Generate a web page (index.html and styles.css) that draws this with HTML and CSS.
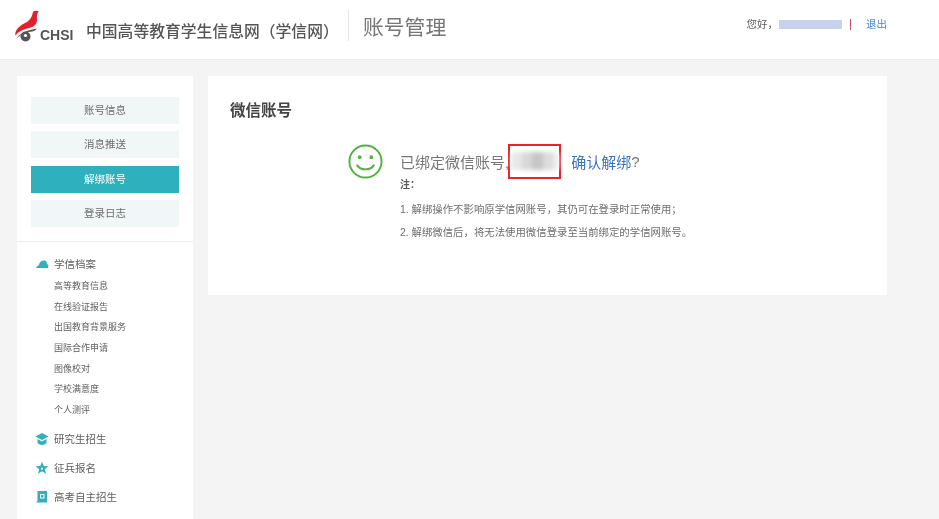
FILE: index.html
```html
<!DOCTYPE html>
<html lang="zh-CN">
<head>
<meta charset="utf-8">
<title>账号管理</title>
<link rel="stylesheet" href="styles.css">
</head>
<body>
<div class="page">
  <header class="topbar">
    <div class="brand">
      <svg class="logo" viewBox="0 0 26 34" aria-hidden="true">
        <path d="M19 2 C20 0.500 23 0.300 25 1.500 C22.500 3.500 23 7 23 10 C23 14 20 17 15 18 C10 19 5 21 1.500 25.500 C0 21 6 15 11 13 C15.500 11 18 7 19 2 Z" fill="#e3202b"/>
        <path d="M2 29 C5.500 23.500 13 20 23 18.500 C22 20 20 21 18.500 21.500 C12 22 6 25 2 29 Z" fill="#555"/>
        <circle cx="11.500" cy="26.500" r="5" fill="#555"/>
        <circle cx="11.500" cy="25.500" r="1.600" fill="#fff"/>
      </svg>
      <span class="logo-text">CHSI</span>
      <span class="site-name">中国高等教育学生信息网（学信网）</span>
      <span class="page-title">账号管理</span>
    </div>
    <div class="user">
      <span>您好，</span>
      <span class="user-mask"></span>
      <span class="user-sep"></span>
      <a class="user-exit">退出</a>
    </div>
  </header>

  <div class="content">
    <aside class="sidebar">
      <nav class="tabs">
        <a class="tab">账号信息</a>
        <a class="tab">消息推送</a>
        <a class="tab tab-active">解绑账号</a>
        <a class="tab">登录日志</a>
      </nav>
      <div class="menu">
        <div class="menu-row menu-row-first">
          <svg class="menu-icon" viewBox="0 0 14 14" aria-hidden="true"><path d="M1 11 C2 9 3 8.500 4 8 C4.500 4.500 7 3 9.500 3.500 C11.500 4 12 5.500 12 7 L13.500 8 L13 11 Z" fill="#30b0bd"/></svg>
          <span>学信档案</span>
        </div>
        <ul class="submenu">
          <li>高等教育信息</li>
          <li>在线验证报告</li>
          <li>出国教育背景服务</li>
          <li>国际合作申请</li>
          <li>图像校对</li>
          <li>学校满意度</li>
          <li>个人测评</li>
        </ul>
        <div class="menu-row menu-row-gap">
          <svg class="menu-icon" viewBox="0 0 14 14" aria-hidden="true"><path d="M7 1 L13.500 4.500 L7 8 L0.500 4.500 Z" fill="#30b0bd"/><path d="M2.500 7 L7 9.500 L11.500 7 L11.500 11 C9 13.500 5 13.500 2.500 11 Z" fill="#30b0bd"/></svg>
          <span>研究生招生</span>
        </div>
        <div class="menu-row">
          <svg class="menu-icon" viewBox="0 0 14 14" aria-hidden="true"><path fill-rule="evenodd" d="M7 .8 L8.800 5 L13.300 5.300 L9.800 8.200 L11 12.800 L7 10.300 L3 12.800 L4.200 8.200 L.7 5.300 L5.200 5 Z M6 6.800 H8 V8.600 H6 Z" fill="#30b0bd"/></svg>
          <span>征兵报名</span>
        </div>
        <div class="menu-row">
          <svg class="menu-icon" viewBox="0 0 14 14" aria-hidden="true"><path fill-rule="evenodd" d="M2.500 1 H12 V12.500 H1 L2.500 11 Z M5 4 H9.500 V8.500 H5 Z M6 5 V7.500 H8.500 V5 Z" fill="#30b0bd"/></svg>
          <span>高考自主招生</span>
        </div>
      </div>
    </aside>

    <main class="panel">
      <h1 class="panel-title">微信账号</h1>
      <div class="bind">
        <svg class="smile" viewBox="0 0 36 36" aria-hidden="true">
          <circle cx="18" cy="18" r="16.500" fill="none" stroke="#4fb33c" stroke-width="2"/>
          <circle cx="12" cy="13.500" r="1.900" fill="#4fb33c"/>
          <circle cx="24" cy="13.500" r="1.900" fill="#4fb33c"/>
          <path d="M9.500 22 C13 27.500 23 27.500 26.500 22" fill="none" stroke="#4fb33c" stroke-width="2" stroke-linecap="round"/>
        </svg>
        <div class="bind-body">
          <p class="bind-line">
            <span>已绑定微信账号,</span><span class="account-box"><span class="account-mask"></span></span><a class="confirm">确认解绑</a><span>?</span>
          </p>
          <p class="note-title">注：</p>
          <p class="note">1. 解绑操作不影响原学信网账号，其仍可在登录时正常使用；</p>
          <p class="note">2. 解绑微信后，将无法使用微信登录至当前绑定的学信网账号。</p>
        </div>
      </div>
    </main>
  </div>
</div>
</body>
</html>
```

FILE: styles.css
```css
* { box-sizing: border-box; }
html, body { margin: 0; padding: 0; }
body {
  background: #f4f4f4;
  color: #666;
  font-family: "Liberation Sans", "Noto Sans CJK SC", sans-serif;
}
p, h1, ul { margin: 0; padding: 0; }
ul { list-style: none; }

.page { height: 519px; overflow: hidden; filter: blur(0.35px); }

.topbar {
  height: 60px;
  background: #fff;
  border-bottom: 1px solid #ececec;
  display: flex;
  justify-content: space-between;
  align-items: flex-start;
  padding-left: 14px;
  padding-right: 52px;
}
.brand { display: flex; align-items: flex-start; padding-top: 9px; }
.logo { width: 26px; height: 34px; margin-top: 1px; flex: none; }
.logo-text {
  font-size: 14px; font-weight: 700; color: #555;
  line-height: 16px; margin-top: 18px; width: 46px; flex: none;
}
.site-name {
  font-family: "Noto Sans CJK SC", sans-serif;
  font-size: 15.800px; font-weight: 500; color: #555;
  line-height: 24px; margin-top: 10px; width: 262px; flex: none; white-space: nowrap;
}
.page-title {
  font-family: "Noto Sans CJK SC", sans-serif;
  font-size: 20.800px; color: #777;
  line-height: 32px; height: 31px; margin-top: 1px;
  padding-left: 14px; border-left: 1px solid #e4e4e4;
  white-space: nowrap;
}
.user {
  display: flex; align-items: center;
  font-size: 10.500px; color: #5e5e5e; padding-top: 17px; line-height: 14px;
}
.user-mask { width: 63px; height: 9px; margin-left: 1px; background: #c6d3ea; }
.user-sep { width: 1px; height: 11px; margin: 0 15px 0 8px; background: #c0506a; }
.user-exit { color: #4f86cf; }

.content {
  display: flex; align-items: flex-start; gap: 15px;
  padding: 16px 0 0 17px;
}
.sidebar { width: 176px; height: 480px; background: #fff; flex: none; }
.tabs {
  display: flex; flex-direction: column; gap: 7.300px;
  padding: 21px 14px 14px;
  border-bottom: 1px solid #eeeeee;
}
.tab {
  height: 27px; line-height: 27.500px; text-align: center;
  background: #f1f6f7; color: #6e6e6e; font-size: 10.500px;
}
.tab-active { background: #2fb0bd; color: #fff; }

.menu { padding-left: 18px; }
.menu-row {
  display: flex; align-items: center; gap: 5px;
  height: 29.200px; font-size: 10.500px; color: #5e5e5e;
}
.menu-row-first { height: 22px; margin-top: 11px; margin-bottom: 1px; }
.menu-row-gap { margin-top: 3px; }
.menu-icon { width: 14px; height: 14px; flex: none; margin-top: 1px; }
.submenu { padding-left: 19px; }
.submenu li { height: 20.700px; line-height: 21.500px; font-size: 9px; color: #5e5e5e; }

.panel {
  width: 679px; height: 219px; background: #fff;
  padding: 24px 22px 0;
}
.panel-title {
  font-size: 15.500px; font-weight: 700; color: #444; line-height: 22px;
}
.bind { display: flex; margin-top: 21px; padding-left: 118px; gap: 17px; }
.smile { width: 35px; height: 35px; flex: none; margin-top: 1px; }
.bind-body { color: #777; }
.bind-line {
  display: flex; align-items: center; height: 36px;
  font-size: 15px; white-space: nowrap; color: #777;
}
.account-box {
  width: 53px; height: 35px; margin: 0 10px 0 -1px;
  border: 2px solid #e8232a;
  display: flex; align-items: center; justify-content: center;
}
.account-mask {
  width: 48px; height: 18px; border-radius: 4px; filter: blur(2px);
  background: linear-gradient(90deg, #e8e8e8 0 22%, #d8d8d8 22% 44%, #c6c6c6 44% 66%, #dcdcdc 66% 88%, #eeeeee 88%);
}
.confirm { color: #3a74c4; }
.note-title { font-size: 10px; font-weight: 700; color: #5e5e5e; line-height: 14px; margin-top: -1px; }
.note { font-size: 10.400px; color: #6e6e6e; line-height: 14px; margin-top: 9px; white-space: nowrap; }
.note-title + .note { margin-top: 11px; }
```
